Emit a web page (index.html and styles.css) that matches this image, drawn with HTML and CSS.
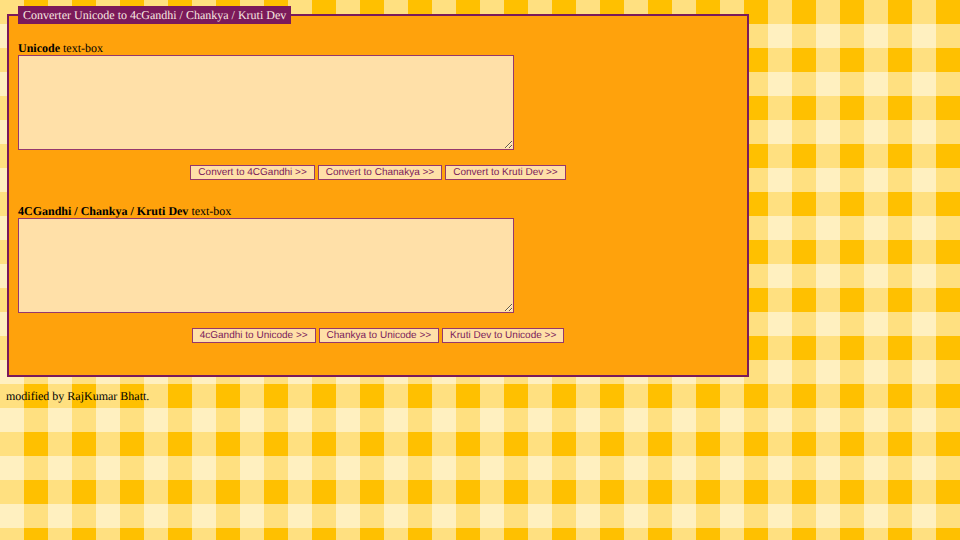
FILE: index.html
```html
<!DOCTYPE html>
<html lang="en">

<head>
  <meta charset="UTF-8">
  <meta name="viewport" content="width=device-width, initial-scale=1.0">
  <title>Converter Unicode to 4cGandhi / Chankya / Kruti Dev</title>
  <link rel="stylesheet" href="styles.css">
</head>

<body>
  <form>
    <fieldset class="box">
      <legend>Converter Unicode to 4cGandhi / Chankya / Kruti Dev</legend>
      <div class="label"><b>Unicode</b> text-box</div>
      <textarea></textarea>
      <div class="btns">
        <input type="button" value="Convert to 4CGandhi &gt;&gt;">
        <input type="button" value="Convert to Chanakya &gt;&gt;">
        <input type="button" value="Convert to Kruti Dev &gt;&gt;">
      </div>
      <div class="label label-next"><b>4CGandhi / Chankya / Kruti Dev</b> text-box</div>
      <textarea></textarea>
      <div class="btns">
        <input type="button" value="4cGandhi to Unicode &gt;&gt;">
        <input type="button" value="Chankya to Unicode &gt;&gt;">
        <input type="button" value="Kruti Dev to Unicode &gt;&gt;">
      </div>
    </fieldset>
  </form>
  <p class="credit">modified by RajKumar Bhatt.</p>
</body>

</html>
```

FILE: styles.css
```css
* {
  box-sizing: border-box;
}

body {
  margin: 0;
  padding: 6px 6px 0;
  font-family: "Liberation Serif", serif;
  font-size: 12px;
  text-rendering: geometricPrecision;
  color: #000;
  background-color: #ffc000;
  background-image:
    linear-gradient(90deg, rgba(255, 255, 255, .5) 50%, transparent 50%),
    linear-gradient(transparent 50%, rgba(255, 255, 255, .5) 50%);
  background-size: 48px 48px;
}

.box {
  width: 742px;
  height: 371px;
  margin: 0 1px;
  padding: 0 9px;
  border: 2px solid #7b1a5a;
  background: #ffa20c;
}

.box legend {
  padding: 0 5px;
  height: 18px;
  line-height: 18px;
  color: #f8e8e0;
  background: #7b1a5a;
}

.label {
  height: 14px;
  line-height: 14px;
  margin-top: 17px;
}

.label-next {
  margin-top: 0;
}

.box textarea {
  display: block;
  width: 496px;
  height: 95px;
  border: 1px solid #96386c;
  background: #ffe0a8;
}

.btns {
  display: flex;
  justify-content: center;
  gap: 3px;
  margin: 15px 0 24px;
}

.btns input {
  height: 15px;
  padding: 0 7px;
  border: 1px solid #96386c;
  border-radius: 0;
  font-family: "Liberation Sans", sans-serif;
  font-size: 10px;
  text-rendering: geometricPrecision;
  color: #7b1a5a;
  background: #ffe0a8;
}

.credit {
  margin: 12px 0 0;
  line-height: 14px;
}
```
